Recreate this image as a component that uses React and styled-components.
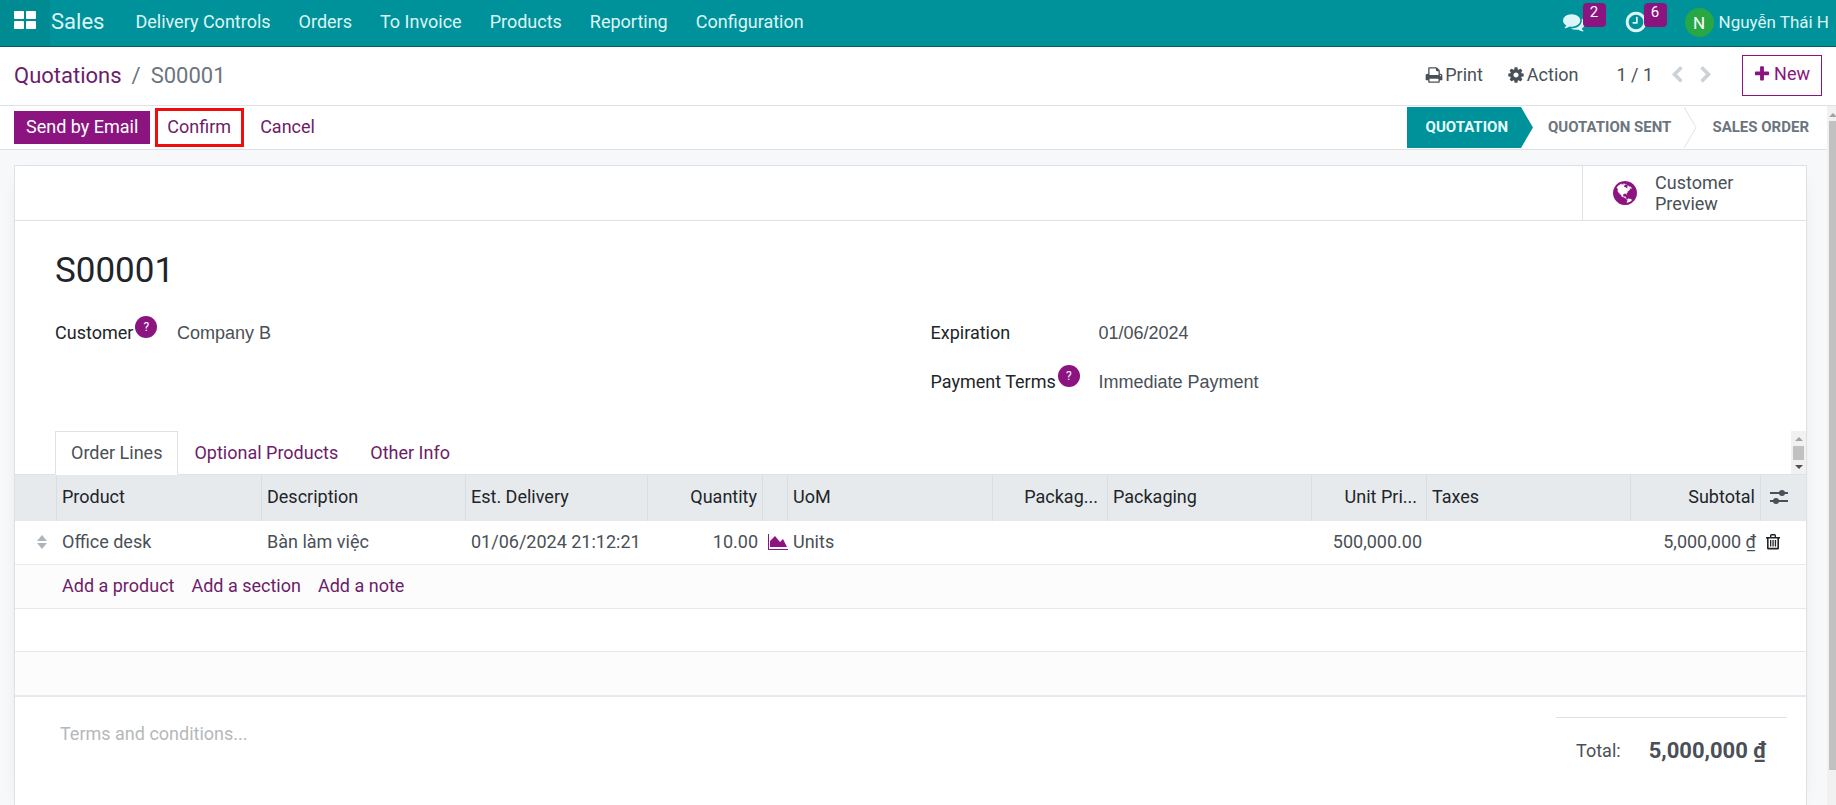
import React from "react";
import styled, { createGlobalStyle, css } from "styled-components";

const color = {
  teal: "#00929a",
  purple: "#8b1480",
  link: "#6c1d69",
  text: "#495057",
  strong: "#212529",
  muted: "#6c757d",
  line: "#dee2e6",
  head: "#e7eaed",
};

const GlobalStyle = createGlobalStyle`
  *, *::before, *::after { box-sizing: border-box; }
  body {
    margin: 0;
    background: #f7f8fa;
    color: ${color.text};
    font-family: Roboto, "Noto Sans", sans-serif;
    font-size: 18px;
    line-height: 26px;
  }
  button, input, textarea { font: inherit; color: inherit; }
  button { border: 0; background: none; padding: 0; cursor: pointer; }
`;

/* ---------- icons ---------- */

const paths = {
  print:
    "M448 1536h896v-256h-896v256zm0-640h896v-384h-160q-40 0-68-28t-28-68v-160h-640v640zm1152 64q0-26-19-45t-45-19-45 19-19 45 19 45 45 19 45-19 19-45zm128 0v416q0 13-9.5 22.5t-22.5 9.5h-224v160q0 40-28 68t-68 28h-960q-40 0-68-28t-28-68v-160h-224q-13 0-22.5-9.5t-9.5-22.5v-416q0-79 56.5-135.5t135.5-56.5h64v-544q0-40 28-68t68-28h672q40 0 88 20t76 48l152 152q28 28 48 76t20 88v256h64q79 0 135.5 56.5t56.5 135.5z",
  cog: "M1152 896q0-106-75-181t-181-75-181 75-75 181 75 181 181 75 181-75 75-181zm512-109v222q0 12-8 23t-20 13l-185 28q-19 54-39 91 35 50 107 138 10 12 10 25t-9 23q-27 37-99 108t-94 71q-12 0-26-9l-138-108q-44 23-91 38-16 136-29 186-7 28-36 28h-222q-14 0-24.5-8.5t-11.5-21.5l-28-184q-49-16-90-37l-141 107q-10 9-25 9-14 0-25-11-126-114-165-168-7-10-7-23 0-12 8-23 15-21 51-66.5t54-70.5q-27-50-41-99l-183-27q-13-2-21-12.5t-8-23.5v-222q0-12 8-23t19-13l186-28q14-46 39-92-40-57-107-138-10-12-10-24 0-10 9-23 26-36 98.5-107.5t94.5-71.5q13 0 26 10l138 107q44-23 91-38 16-136 29-186 7-28 36-28h222q14 0 24.5 8.5t11.5 21.5l28 184q49 16 90 37l142-107q9-9 24-9 13 0 25 10 129 119 165 170 7 8 7 22 0 12-8 23-15 21-51 66.5t-54 70.5q26 50 41 98l183 28q13 2 21 12.5t8 23.5z",
  plus: "M1600 736v192q0 40-28 68t-68 28h-416v416q0 40-28 68t-68 28h-192q-40 0-68-28t-28-68v-416h-416q-40 0-68-28t-28-68v-192q0-40 28-68t68-28h416v-416q0-40 28-68t68-28h192q40 0 68 28t28 68v416h416q40 0 68 28t28 68z",
  comments:
    "M1408 768q0 139-94 257t-256.5 186.5-353.5 68.5q-86 0-176-16-124 88-278 128-36 9-86 16h-3q-11 0-20.5-8t-11.5-21q-1-3-1-6.5t.5-6.5 2-6l2.5-5 3.5-5.5 4-5 4.5-5 4-4.5q5-6 23-25t26-29.5 22.5-29 25-38.5 20.5-44q-124-72-195-177t-71-224q0-139 94-257t256.5-186.5 353.5-68.5 353.5 68.5 256.5 186.5 94 257zm384 256q0 120-71 224.5t-195 176.5q10 24 20.5 44t25 38.5 22.5 29 26 29.5 23 25q1 1 4 4.5t4.5 5 4 5 3.5 5.5l2.5 5 2 6 .5 6.5-1 6.5q-3 14-13 22t-22 7q-50-7-86-16-154-40-278-128-90 16-176 16-271 0-472-132 58 4 88 4 161 0 309-45t264-129q125-92 192-212t67-254q0-77-23-152 129 71 204 178t75 230z",
  clock:
    "M1024 544v448q0 14-9 23t-23 9h-320q-14 0-23-9t-9-23v-64q0-14 9-23t23-9h224v-352q0-14 9-23t23-9h64q14 0 23 9t9 23zm416 352q0-148-73-273t-198-198-273-73-273 73-198 198-73 273 73 273 198 198 273 73 273-73 198-198 73-273zm224 0q0 209-103 385.5t-279.5 279.5-385.5 103-385.5-103-279.5-279.5-103-385.5 103-385.5 279.5-279.5 385.5-103 385.5 103 279.5 279.5 103 385.5z",
  left: "M1427 301l-531 531 531 531q19 19 19 45t-19 45l-166 166q-19 19-45 19t-45-19l-742-742q-19-19-19-45t19-45l742-742q19-19 45-19t45 19l166 166q19 19 19 45t-19 45z",
  right:
    "M1363 877l-742 742q-19 19-45 19t-45-19l-166-166q-19-19-19-45t19-45l531-531-531-531q-19-19-19-45t19-45l166-166q19-19 45-19t45 19l742 742q19 19 19 45t-19 45z",
  globe:
    "M896 128q209 0 385.5 103t279.5 279.5 103 385.5-103 385.5-279.5 279.5-385.5 103-385.5-103-279.5-279.5-103-385.5 103-385.5 279.5-279.5 385.5-103zm274 521q-2 1-9.5 9.5t-13.5 9.5q2 0 4.5-5t5-11 3.5-7q6-7 22-15 14-6 52-12 34-8 51 11-2-2 9.5-13t14.5-12q3-2 15-4.5t15-7.5l2-22q-12 1-17.5-7t-6.5-21q0 2-6 8 0-7-4.5-8t-11.5 1-9 1q-10-3-15-7.5t-8-16.5-4-15q-2-5-9.5-11t-9.5-10q-1-2-2.5-5.5t-3-6.5-4-5.5-5.5-2.5-7 5-7.5 10-4.5 5q-3-2-6-1.5t-4.5 1-4.5 3-5 3.5q-3 2-8.5 3t-8.5 2q15-5-1-11-10-4-16-3 9-4 7.5-12t-8.5-14h5q-1-4-8.5-8.5t-17.5-8.5-13-6q-8-5-34-9.5t-33-.5q-5 6-4.5 10.5t4 14 3.5 12.5q1 6-5.5 13t-6.5 12q0 7 14 15.5t10 21.5q-3 8-16 16t-16 12q-5 8-1.5 18.5t10.5 16.5q2 2 1.5 4t-3.5 4.5-5.5 4-6.5 3.5l-3 2q-11 5-20.5-6t-13.5-26q-7-25-16-30-23-8-29 1-5-13-41-26-25-9-58-4 6-1 0-15-7-15-19-12 3-6 4-17.5t1-13.5q3-13 12-23 1-1 7-8.5t9.5-13.5.5-6q35 4 50-11 5-5 11.5-17t10.5-17q9-6 14-5.5t14.5 5.5 14.5 5q14 1 15.5-11t-7.5-20q12 1 3-17-4-7-8-9-12-4-27 5-8 4 2 8-1-1-9.5 10.5t-16.5 17.5-16-5q-1-1-5.5-13.5t-9.5-13.5q-8 0-16 15 3-8-11-15t-24-8q19-12-8-27-7-4-20.5-5t-19.5 4q-5 7-5.5 11.5t5 8 10.5 5.5 11.5 4 8.5 3q14 10 8 14-2 1-8.5 3.5t-11.5 4.5-6 4q-3 4 0 14t-2 14q-5-5-9-17.5t-7-16.5q7 9-25 6l-10-1q-4 0-16 2t-20.5 1-13.5-8q-4-8 0-20 1-4 4-2-4-3-11-9.5t-10-8.5q-46 15-94 41 6 1 12-1 5-2 13-6.5t10-5.5q34-14 42-7l5-5q14 16 20 25-7-4-30-1-20 6-22 12 7 12 5 18-4-3-11.5-10t-14.5-11-15-5q-16 0-22 1-146 80-235 222 7 7 12 8 4 1 5 9t2.5 11 11.5-3q9 8 3 19 1-1 44 27 19 17 21 21 3 11-10 18-1-2-9-9t-9-4q-3 5 .5 18.5t10.5 12.5q-7 0-9.5 16t-2.5 35.5-1 23.5l2 1q-3 12 5.5 34.5t21.5 19.5q-13 3 20 43 6 8 8 9 3 2 12 7.5t15 10 10 10.5q4 5 10 22.5t14 23.5q-2 6 9.5 20t10.5 23q-1 0-2.5 1t-2.5 1q3 7 15.5 14t15.5 13q1 3 2 10t3 11 8 2q2-20-24-62-15-25-17-29-3-5-5.5-15.5t-4.5-14.5q2 0 6 1.5t8.5 3.5 7.5 4 2 3q-3 7 2 17.5t12 18.5 17 19 12 13q6 6 14 19.5t0 13.5q9 0 20 10.5t17 19.5q5 8 8 26t5 24q2 7 8.5 13.5t12.5 9.5l16 8 13 7q5 2 18.5 10.5t21.5 11.5q10 4 16 4t14.5-2.5 13.5-3.5q15-2 29 15t21 21q36 19 55 11-2 1 .5 7.5t8 15.5 9 14.5 5.5 8.5q5 6 18 15t18 15q6-4 7-9-3 8 7 20t18 10q14-3 14-32-31 15-49-18 0-1-2.5-5.5t-4-8.5-2.5-8.5 0-7.5 5-3q9 0 10-3.5t-2-12.5-4-13q-1-8-11-20t-12-15q-5 9-16 8t-16-9q0 1-1.5 5.5t-1.5 6.5q-13 0-15-1 1-3 2.5-17.5t3.5-22.5q1-4 5.5-12t7.5-14.5 4-12.5-4.5-9.5-17.5-2.5q-19 1-26 20-1 3-3 10.5t-5 11.5-9 7q-7 3-24 2t-24-5q-13-8-22.5-29t-9.5-37q0-10 2.5-26.5t3-25-5.5-24.5q3-2 9-9.5t10-10.5q2-1 4.5-1.5t4.5 0 4-1.5 3-6q-1-1-4-3-3-3-4-3 7 3 28.5-1.5t27.5 1.5q15 11 22-2 0-1-2.5-9.5t-.5-13.5q5 27 29 9 3 3 15.5 5t17.5 5q3 2 7 5.5t5.5 4.5 5-.5 8.500-6.500q10 14 12 24 11 40 19 44 7 3 11 2t4.500-9.500 0-14-1.500-12.500l-1-8v-18l-1-8q-15-3-18.500-12t1.500-18.500 15-18.500q1-1 8-3.500t15.500-6.500 12.500-8q21-19 15-35 7 0 11-9-1 0-5-3t-7.500-5-4.500-2q9-5 2-16 5-3 7.500-11t7.500-10q9 12 21 2 7-8 1-16 5-7 20.500-10.500t18.500-9.500q7 2 8-2t1-12 3-12q4-5 15-9t13-5l17-11q3-4 0-4 18 2 31-11 10-11-6-20 3-6-3-9.500t-15-5.500q3-1 11.500-.5t10.500-1.500q15-10-7-16-17-5-43 12zm-163 877q206-36 351-189-3-3-12.500-4.500t-12.500-3.500q-18-7-24-8 1-7-2.500-13t-8-9-12.500-8-11-7q-2-2-7-6t-7-5.500-7.500-4.500-8.500-2-10 1l-3 1q-3 1-5.500 2.500t-5.500 3-4 3 0 2.500q-21-17-36-22-5-1-11-5.500t-10.500-7-10-1.500-11.500 7q-5 5-6 15t-2 13q-7-5 0-17.500t2-18.500q-3-6-10.500-4.500t-12 4.500-11.500 8.500-9 6.500-8.500 5.500-8.500 7.500q-3 4-6 12t-5 11q-2-4-11.500-6.500t-9.500-5.500q2 10 4 35t5 38q7 31-12 48-27 25-29 40-4 22 12 26 0 7-8 20.500t-7 21.500q0 6 2 16z",
};

const Svg = styled.svg`
  display: block;
  flex: none;
  fill: currentColor;
`;

const Icon = ({ name, size = 18 }) => (
  <Svg width={size} height={size} viewBox="0 0 1792 1792" aria-hidden="true">
    <path d={paths[name]} />
  </Svg>
);

const AppsIcon = () => (
  <Svg width="22" height="18" viewBox="0 0 22 18" aria-hidden="true">
    <rect width="10" height="8" rx="1" />
    <rect x="12" width="10" height="8" rx="1" />
    <rect y="10" width="10" height="8" rx="1" />
    <rect x="12" y="10" width="10" height="8" rx="1" />
  </Svg>
);

const ChartIcon = () => (
  <Svg width="20" height="16" viewBox="0 0 20 16" aria-hidden="true">
    <path d="M0 0h1v15h19v1H0z" />
    <path d="M2 13V7l5-5 5 6 3-3 4 8z" />
  </Svg>
);

const AdjustIcon = () => (
  <Svg width="18" height="16" viewBox="0 0 18 16" aria-hidden="true">
    <path d="M0 3h18v2H0zM0 11h18v2H0z" />
    <circle cx="12" cy="4" r="3" />
    <circle cx="6" cy="12" r="3" />
  </Svg>
);

const TrashIcon = () => (
  <Svg width="14" height="16" viewBox="0 0 14 16" aria-hidden="true">
    <path d="M0 3h14v1.500H0zM4 3V1.200L5 0h4l1 1.200V3H8.600V1.400H5.400V3z" />
    <path d="M1 4h1.600v9.800h8.800V4H13v10.500L12.200 15.500H1.800L1 14.500z" />
    <path d="M4 6h1.300v6.500H4zM6.400 6h1.300v6.500H6.400zM8.800 6h1.300v6.500H8.800z" />
  </Svg>
);

const SortIcon = () => (
  <Svg width="10" height="14" viewBox="0 0 10 14" aria-hidden="true">
    <path d="M5 0l5 6H0zM5 14l5-6H0z" />
  </Svg>
);

/* ---------- navbar ---------- */

const Page = styled.div`
  display: flex;
  flex-direction: column;
  height: 100vh;
  overflow: hidden;
`;

const Navbar = styled.header`
  display: flex;
  align-items: stretch;
  flex: none;
  height: 47px;
  padding-right: 7px;
  background: ${color.teal};
  border-bottom: 1px solid #0b5a62;
  color: #dcf5f6;
`;

const AppsButton = styled.button`
  display: grid;
  place-items: center;
  width: 50px;
  padding-bottom: 6px;
  background: #008a92;
  color: #fff;
`;

const Brand = styled.a`
  padding: 9px 17px 0 1px;
  font-size: 22px;
  color: inherit;
  text-decoration: none;
`;

const Menu = styled.nav`
  display: flex;
  flex: 1;
`;

const MenuItem = styled.button`
  padding: 0 14px 3px;
  white-space: nowrap;
`;

const Systray = styled.div`
  display: flex;
  align-items: center;
  padding-bottom: 2px;
`;

const TrayButton = styled.button`
  position: relative;
  width: 61px;
  height: 24px;
  display: flex;
  align-items: center;
`;

const Badge = styled.span`
  position: absolute;
  left: 20px;
  top: -7px;
  width: 23px;
  height: 24px;
  border-radius: 4px;
  background: ${color.purple};
  color: #fff;
  font-size: 15px;
  line-height: 18px;
`;

const UserButton = styled.button`
  display: flex;
  align-items: center;
  gap: 5px;
  font-size: 17px;
  white-space: nowrap;
`;

const Avatar = styled.span`
  width: 29px;
  height: 29px;
  border-radius: 50%;
  background: #28a745;
  color: #fff;
  line-height: 30px;
  text-align: center;
`;

/* ---------- control panel ---------- */

const ControlPanel = styled.div`
  display: flex;
  align-items: center;
  justify-content: space-between;
  flex: none;
  height: 59px;
  padding: 0 14px;
  background: #fff;
  border-bottom: 1px solid ${color.line};
`;

const Breadcrumb = styled.nav`
  display: flex;
  gap: 10px;
  font-size: 22px;
  color: ${color.muted};
`;

const Link = styled.a`
  color: ${color.link};
  text-decoration: none;
`;

const Actions = styled.div`
  display: flex;
  align-items: center;
  padding-bottom: 2px;
`;

const ActionButton = styled.button`
  display: flex;
  align-items: center;
  gap: 2px;
  margin-right: 24px;
`;

const Pager = styled.div`
  display: flex;
  align-items: center;
  gap: 11px;
  margin: 0 27px 0 14px;
`;

const PagerButton = styled.button`
  color: #ced2d6;
`;

const PagerText = styled.span`
  margin-right: 4px;
`;

const NewButton = styled.button`
  display: flex;
  align-items: center;
  gap: 3px;
  height: 41px;
  padding: 0 11px 2px 10px;
  border: 1px solid ${color.purple};
  color: ${color.purple};
`;

/* ---------- scrolling body ---------- */

const Body = styled.div`
  display: flex;
  flex: 1;
  min-height: 0;
`;

const Content = styled.main`
  display: flex;
  flex-direction: column;
  flex: 1;
  min-width: 0;
`;

const PageScroll = styled.div`
  flex: none;
  width: 9px;
  padding: 7px 0 35px 2px;
  display: flex;
  flex-direction: column;
  gap: 4px;
  overflow: hidden;
  background: #f1f1f1;
`;

const ScrollArrow = styled.span`
  flex: none;
  width: 0;
  height: 0;
  border: 4px solid transparent;
  ${(p) =>
    p.$down
      ? css`border-bottom: 0; border-top-color: ${p.$tone};`
      : css`border-top: 0; border-bottom-color: ${p.$tone};`}
`;

const ScrollThumb = styled.span`
  flex: 1;
  background: #c1c1c1;
`;

const StatusBar = styled.div`
  display: flex;
  align-items: center;
  justify-content: space-between;
  flex: none;
  height: 44px;
  padding: 0 5px 0 14px;
  background: #fff;
  border-bottom: 1px solid ${color.line};
`;

const ButtonRow = styled.div`
  display: flex;
  align-items: center;
  gap: 5px;
`;

const PrimaryButton = styled.button`
  height: 33px;
  padding: 0 12px 2px;
  background: ${color.purple};
  color: #fff;
`;

const LinkButton = styled.button`
  height: 39px;
  padding: 0 11px 2px;
  color: ${color.link};
  ${(p) =>
    p.$marked &&
    css`
      padding: 0 10px 2px 9px;
      border: 3px solid #f20d0d;
    `}
`;

const Stages = styled.div`
  display: flex;
  align-items: center;
`;

const Stage = styled.button`
  height: 41px;
  padding: 0 13px 1px 15px;
  font-size: 15px;
  font-weight: 700;
  color: ${color.muted};
  ${(p) =>
    p.$active &&
    css`
      padding: 0 25px 1px 19px;
      background: ${color.teal};
      color: #e6fbfb;
      clip-path: polygon(0 0, calc(100% - 12px) 0, 100% 50%, calc(100% - 12px) 100%, 0 100%);
    `}
`;

const StageDivider = () => (
  <Svg width="13" height="41" viewBox="0 0 13 41" aria-hidden="true">
    <path d="M0 0l12 20.500L0 41" fill="none" stroke={color.line} />
  </Svg>
);

/* ---------- sheet ---------- */

const Sheet = styled.section`
  display: flex;
  flex-direction: column;
  flex: 1;
  min-height: 0;
  margin: 15px 20px 0 14px;
  background: #fff;
  border: 1px solid ${color.line};
  border-bottom: 0;
  box-shadow: 0 5px 20px -15px #00000066;
`;

const ButtonBox = styled.div`
  display: flex;
  justify-content: flex-end;
  height: 55px;
  border-bottom: 1px solid ${color.line};
`;

const StatButton = styled.button`
  display: flex;
  align-items: center;
  gap: 16px;
  width: 224px;
  padding-left: 28px;
  border-left: 1px solid ${color.line};
  text-align: left;
  line-height: 21px;
`;

const StatIcon = styled.span`
  color: ${color.purple};
`;

const StatText = styled.span`
  width: 90px;
`;

const Title = styled.h1`
  margin: 28px 40px 0;
  font-size: 35px;
  line-height: 44px;
  font-weight: 400;
  color: ${color.strong};
`;

const Groups = styled.div`
  display: grid;
  grid-template-columns: 1fr 1fr;
  padding: 20px 40px 0;
  min-height: 138px;
`;

const Fields = styled.div`
  display: grid;
  align-content: start;
  grid-template-columns: ${(p) => p.$label}px 1fr;
  row-gap: 9px;
  padding-left: ${(p) => p.$indent || 0}px;
`;

const Label = styled.label`
  display: flex;
  gap: 2px;
  height: 40px;
  align-items: center;
  color: ${color.strong};
  white-space: nowrap;
`;

const Help = styled.sup`
  align-self: flex-start;
  width: 22px;
  height: 22px;
  margin-top: 3px;
  border-radius: 50%;
  background: ${color.purple};
  color: #fff;
  font-size: 12px;
  line-height: 22px;
  text-align: center;
`;

const Field = styled.input`
  width: 100%;
  height: 40px;
  padding: 0;
  border: 0;
  background: none;
  outline: 0;
  font-family: "Liberation Sans", sans-serif;
`;

/* ---------- notebook ---------- */

const Tabs = styled.div`
  display: flex;
  height: 44px;
  padding-left: 40px;
  border-bottom: 1px solid ${color.line};
`;

const TabList = styled.div`
  display: flex;
  flex: 1;
`;

const Tab = styled.button`
  height: 44px;
  padding: 0 15px 1px;
  border: 1px solid transparent;
  color: ${color.link};
  ${(p) =>
    p.$active &&
    css`
      border-color: ${color.line};
      border-bottom-color: #fff;
      background: #fff;
      color: ${color.text};
    `}
`;

const TabScroll = styled.div`
  display: flex;
  flex-direction: column;
  justify-content: space-between;
  align-items: center;
  width: 15px;
  padding: 6px 0 5px;
  background: #f1f1f1;
`;

const TabThumb = styled.span`
  width: 11px;
  height: 14px;
  background: #c1c1c1;
`;

const Table = styled.table`
  width: 100%;
  table-layout: fixed;
  border-collapse: separate;
  border-spacing: 0;
  border-bottom: 2px solid ${color.head};
`;

const HeadCell = styled.th`
  height: 46px;
  padding: 0 ${(p) => (p.$cut ? 9 : 5)}px 2px 5px;
  background: ${color.head};
  border-right: 1px solid #d8dee3;
  color: ${color.strong};
  font-weight: 400;
  text-align: ${(p) => (p.$right ? "right" : "left")};
  white-space: nowrap;
  &:last-child { border-right: 0; }
`;

const Row = styled.tr`
  background: ${(p) => (p.$shaded ? "#fcfcfc" : "#fff")};
  &:not(:last-child) > td { border-bottom: 1px solid ${color.head}; }
`;

const Cell = styled.td`
  height: ${(p) => (p.$short ? 43 : 44)}px;
  padding: 0 5px 2px;
  text-align: ${(p) => (p.$right ? "right" : "left")};
  white-space: nowrap;
`;

const IconButton = styled.button`
  display: block;
  margin: ${(p) => p.$margin || "0"};
  color: ${(p) => p.$tone || "inherit"};
`;

const AddLinks = styled.div`
  display: flex;
  gap: 17px;
`;

/* ---------- footer ---------- */

const Footer = styled.div`
  display: flex;
  justify-content: space-between;
  align-items: flex-start;
  padding: 20px 19px 0 45px;
`;

const Terms = styled.textarea`
  width: 600px;
  height: 60px;
  padding: 4px 0;
  border: 0;
  outline: 0;
  resize: none;
  &::placeholder { color: #b5b8bb; opacity: 1; }
`;

const Totals = styled.div`
  display: flex;
  align-items: center;
  justify-content: flex-end;
  gap: 28px;
  width: 231px;
  padding: 19px 21px 0 0;
  border-top: 1px solid ${color.line};
`;

const Amount = styled.strong`
  font-size: 22px;
  line-height: 28px;
  font-weight: 700;
`;

const menus = ["Delivery Controls", "Orders", "To Invoice", "Products", "Reporting", "Configuration"];

const columns = [
  { width: 42 },
  { width: 205, label: "Product" },
  { width: 204, label: "Description" },
  { width: 182, label: "Est. Delivery" },
  { width: 115, label: "Quantity", right: true },
  { width: 25 },
  { width: 205, label: "UoM" },
  { width: 115, label: "Packag...", right: true, cut: true },
  { width: 204, label: "Packaging" },
  { width: 115, label: "Unit Pri...", right: true, cut: true },
  { width: 204, label: "Taxes" },
  { width: 130, label: "Subtotal", right: true },
  { width: 45, tool: true },
];

export default function App() {
  return (
    <Page>
      <GlobalStyle />
      <Navbar>
        <AppsButton aria-label="Apps"><AppsIcon /></AppsButton>
        <Brand href="#sales">Sales</Brand>
        <Menu>
          {menus.map((m) => <MenuItem key={m}>{m}</MenuItem>)}
        </Menu>
        <Systray>
          <TrayButton aria-label="Messages">
            <Icon name="comments" size={22} />
            <Badge>2</Badge>
          </TrayButton>
          <TrayButton aria-label="Activities">
            <Icon name="clock" size={24} />
            <Badge>6</Badge>
          </TrayButton>
          <UserButton>
            <Avatar>N</Avatar>
            Nguyễn Thái H
          </UserButton>
        </Systray>
      </Navbar>

      <ControlPanel>
        <Breadcrumb>
          <Link href="#quotations">Quotations</Link>
          <span>/</span>
          <span>S00001</span>
        </Breadcrumb>
        <Actions>
          <ActionButton><Icon name="print" />Print</ActionButton>
          <ActionButton><Icon name="cog" />Action</ActionButton>
          <Pager>
            <PagerText>1 / 1</PagerText>
            <PagerButton aria-label="Previous"><Icon name="left" /></PagerButton>
            <PagerButton aria-label="Next"><Icon name="right" /></PagerButton>
          </Pager>
          <NewButton><Icon name="plus" />New</NewButton>
        </Actions>
      </ControlPanel>

      <Body>
        <Content>
          <StatusBar>
            <ButtonRow>
              <PrimaryButton>Send by Email</PrimaryButton>
              <LinkButton $marked>Confirm</LinkButton>
              <LinkButton>Cancel</LinkButton>
            </ButtonRow>
            <Stages>
              <Stage $active>QUOTATION</Stage>
              <Stage>QUOTATION SENT</Stage>
              <StageDivider />
              <Stage>SALES ORDER</Stage>
            </Stages>
          </StatusBar>

          <Sheet>
            <ButtonBox>
              <StatButton>
                <StatIcon><Icon name="globe" size={28} /></StatIcon>
                <StatText>Customer Preview</StatText>
              </StatButton>
            </ButtonBox>

            <Title>S00001</Title>

            <Groups>
              <Fields $label={122}>
                <Label htmlFor="customer">Customer<Help>?</Help></Label>
                <Field id="customer" defaultValue="Company B" />
              </Fields>
              <Fields $label={168} $indent={20}>
                <Label htmlFor="expiration">Expiration</Label>
                <Field id="expiration" defaultValue="01/06/2024" />
                <Label htmlFor="terms">Payment Terms<Help>?</Help></Label>
                <Field id="terms" defaultValue="Immediate Payment" />
              </Fields>
            </Groups>

            <Tabs>
              <TabList role="tablist">
                <Tab role="tab" aria-selected="true" $active>Order Lines</Tab>
                <Tab role="tab" aria-selected="false">Optional Products</Tab>
                <Tab role="tab" aria-selected="false">Other Info</Tab>
              </TabList>
              <TabScroll>
                <ScrollArrow $tone="#a3a3a3" />
                <TabThumb />
                <ScrollArrow $down $tone="#505050" />
              </TabScroll>
            </Tabs>

            <Table>
              <colgroup>
                {columns.map((c, i) => <col key={i} width={c.width} />)}
              </colgroup>
              <thead>
                <tr>
                  {columns.map((c, i) => (
                    <HeadCell key={i} $right={c.right} $cut={c.cut}>
                      {c.tool ? (
                        <IconButton aria-label="Columns" $margin="0 4px" $tone={color.text}>
                          <AdjustIcon />
                        </IconButton>
                      ) : c.label}
                    </HeadCell>
                  ))}
                </tr>
              </thead>
              <tbody>
                <Row>
                  <Cell>
                    <IconButton aria-label="Reorder" $margin="0 0 0 17px" $tone="#adb5bd">
                      <SortIcon />
                    </IconButton>
                  </Cell>
                  <Cell>Office desk</Cell>
                  <Cell>Bàn làm việc</Cell>
                  <Cell>01/06/2024 21:12:21</Cell>
                  <Cell $right>10.00</Cell>
                  <Cell>
                    <IconButton aria-label="Forecast" $tone={color.purple}><ChartIcon /></IconButton>
                  </Cell>
                  <Cell>Units</Cell>
                  <Cell />
                  <Cell />
                  <Cell $right>500,000.00</Cell>
                  <Cell />
                  <Cell $right>5,000,000 ₫</Cell>
                  <Cell>
                    <IconButton aria-label="Delete" $tone={color.strong}><TrashIcon /></IconButton>
                  </Cell>
                </Row>
                <Row $shaded>
                  <Cell />
                  <Cell colSpan={12}>
                    <AddLinks>
                      <Link href="#product">Add a product</Link>
                      <Link href="#section">Add a section</Link>
                      <Link href="#note">Add a note</Link>
                    </AddLinks>
                  </Cell>
                </Row>
                <Row><Cell $short colSpan={13} /></Row>
                <Row $shaded><Cell $short colSpan={13} /></Row>
              </tbody>
            </Table>

            <Footer>
              <Terms aria-label="Terms and conditions" placeholder="Terms and conditions..." />
              <Totals>
                <span>Total:</span>
                <Amount>5,000,000 ₫</Amount>
              </Totals>
            </Footer>
          </Sheet>
        </Content>
        <PageScroll>
          <ScrollArrow $tone="#a3a3a3" />
          <ScrollThumb />
        </PageScroll>
      </Body>
    </Page>
  );
}
